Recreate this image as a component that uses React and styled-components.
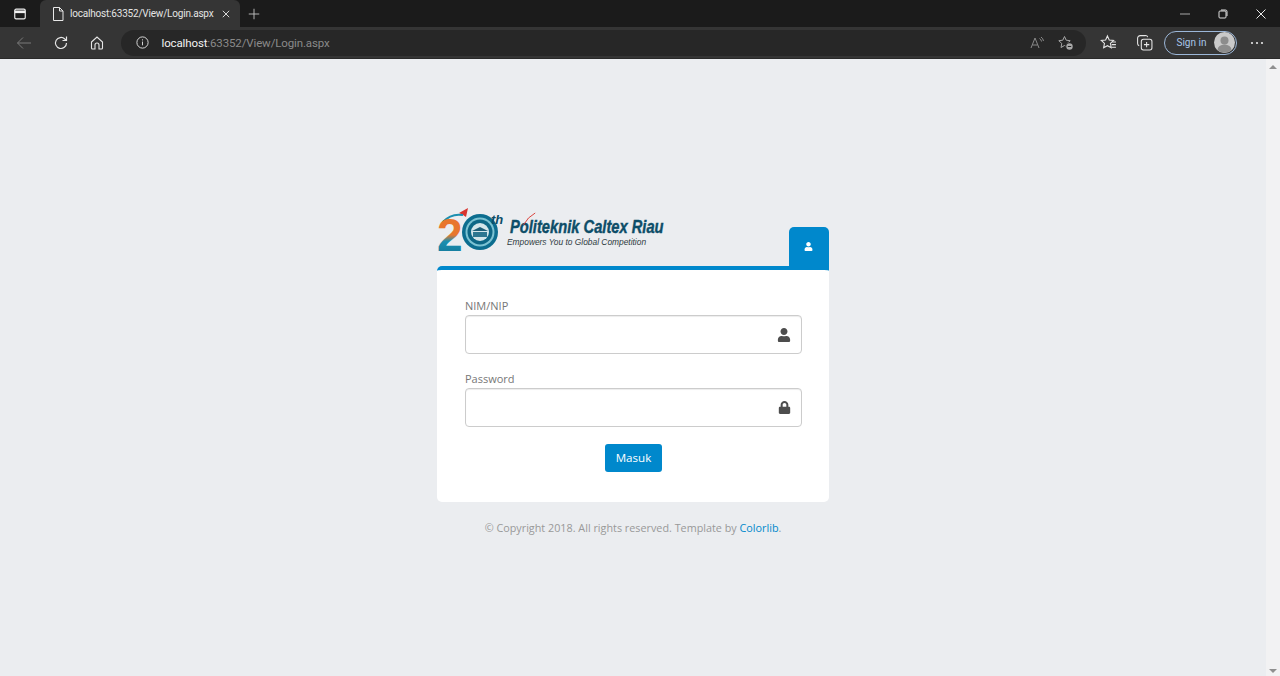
import React from "react";
import styled, { createGlobalStyle } from "styled-components";
import { FaUser, FaLock } from "react-icons/fa";

const GlobalStyle = createGlobalStyle`
	html, body { margin: 0; padding: 0; height: 100%; overflow: hidden; }
	body { background: #ebedf0; font-family: "Open Sans", "Liberation Sans", sans-serif; }
	#root { height: 100%; }
	svg { flex-shrink: 0; }
`;

const Shell = styled.div`
	display: flex;
	flex-direction: column;
	height: 676px;
	width: 1280px;
`;

/* browser chrome */
const TabStrip = styled.div`
	display: flex;
	align-items: flex-end;
	height: 27px;
	background: #1b1b1b;
	color: #e8e8e8;
	font-family: Roboto, "Liberation Sans", sans-serif;
`;
const TabActions = styled.div`
	display: flex;
	align-items: center;
	justify-content: center;
	width: 40px;
	height: 27px;
`;
const Tab = styled.div`
	display: flex;
	align-items: center;
	width: 200px;
	height: 27px;
	box-sizing: border-box;
	padding: 0 10px 0 10px;
	background: #353535;
	border-radius: 6px 6px 0 0;
	font-size: 10px;
`;
const TabTitle = styled.span`
	flex: 1;
	margin-left: 4px;
	letter-spacing: -0.2px;
	white-space: nowrap;
	color: #e4e4e4;
`;
const NewTab = styled.div`
	display: flex;
	align-items: center;
	justify-content: center;
	width: 28px;
	height: 27px;
`;
const WindowButtons = styled.div`
	display: flex;
	margin-left: auto;
	height: 27px;
	align-items: center;
`;
const WindowButton = styled.div`
	display: flex;
	align-items: center;
	justify-content: center;
	width: 38px;
`;

const Toolbar = styled.div`
	display: flex;
	align-items: center;
	height: 32px;
	box-sizing: border-box;
	background: #353535;
	border-bottom: 1px solid #2a2a2a;
	padding-left: 6px;
	font-family: Roboto, "Liberation Sans", sans-serif;
`;
const NavButton = styled.div`
	display: flex;
	align-items: center;
	justify-content: center;
	width: 36.5px;
	height: 26px;
`;
const AddressBar = styled.div`
	display: flex;
	align-items: center;
	width: 965px;
	height: 26px;
	margin-left: 5px;
	padding: 0 11px 0 14px;
	box-sizing: border-box;
	background: #272727;
	border-radius: 13px;
	font-size: 11.5px;
	letter-spacing: -0.13px;
`;
const Host = styled.span`
	margin-left: 12px;
	color: #f2f2f2;
`;
const UrlRest = styled.span`
	color: #8a8a8a;
`;
const AddressActions = styled.div`
	display: flex;
	align-items: center;
	gap: 13px;
	margin-left: auto;
	padding-right: 1px;
`;
const ToolActions = styled.div`
	display: flex;
	align-items: center;
	gap: 19px;
	margin-left: 14px;
`;
const SignIn = styled.div`
	display: flex;
	align-items: center;
	justify-content: space-between;
	width: 73px;
	height: 24px;
	box-sizing: border-box;
	margin-left: -8px;
	padding: 0 1px 0 12px;
	border: 1px solid #9cb7d8;
	border-radius: 12px;
	color: #a9c6ea;
	font-size: 10px;
`;
const More = styled.div`
	display: flex;
	align-items: center;
	margin-left: 12px;
`;

/* page */
const Viewport = styled.div`
	flex: 1;
	display: flex;
	min-height: 0;
`;
const Page = styled.main`
	flex: 1;
	display: flex;
	flex-direction: column;
	align-items: center;
	padding-top: 148px;
	background: #ebedf0;
`;
const Scrollbar = styled.div`
	display: flex;
	flex-direction: column;
	justify-content: space-between;
	align-items: center;
	width: 14px;
	padding: 6px 0 3px;
	box-sizing: border-box;
	background: #f2f2f3;
`;
const Arrow = styled.div`
	width: 0;
	height: 0;
	border-left: 4px solid transparent;
	border-right: 4px solid transparent;
	border-${(p) => (p.$down ? "top" : "bottom")}: 4px solid #8f8f8f;
`;

const LoginBox = styled.div`
	width: 392px;
`;
const BoxHeader = styled.div`
	display: flex;
	align-items: flex-start;
	justify-content: space-between;
	height: 59px;
`;
const LogoWrap = styled.div`
	display: flex;
	align-items: flex-start;
`;
const LogoText = styled.div`
	display: flex;
	flex-direction: column;
	padding-top: 11px;
	white-space: nowrap;
	font-family: "Liberation Sans", Arial, sans-serif;
	font-style: italic;
`;
const LogoTitle = styled.div`
	position: relative;
	margin-left: 3px;
	height: 18px;
	line-height: 18px;
	font-size: 17.5px;
	font-weight: 700;
	color: #0d4d68;
	-webkit-text-stroke: 0.4px #0d4d68;
	transform: scaleX(0.84);
	transform-origin: left center;
`;
const Swoosh = styled.svg`
	position: absolute;
	left: 14px;
	top: -6px;
`;
const LogoTagline = styled.div`
	line-height: 10px;
	margin-top: 1px;
	font-size: 8.4px;
	color: #2d3a40;
`;
const UserTab = styled.div`
	display: flex;
	align-items: center;
	justify-content: center;
	align-self: flex-end;
	width: 40px;
	height: 43px;
	margin-bottom: -4px;
	padding: 0 2px 4px 0;
	box-sizing: border-box;
	background: #0088cc;
	border-radius: 5px 5px 0 0;
	color: #fff;
	font-size: 9px;
	position: relative;
`;
const Card = styled.form`
	box-sizing: border-box;
	height: 236px;
	padding: 27px 27px 0 28px;
	background: #fff;
	border-top: 4px solid #0088cc;
	border-radius: 5px;
`;
const Field = styled.div`
	margin-bottom: 16px;
`;
const Label = styled.label`
	display: block;
	height: 18px;
	line-height: 17px;
	font-size: 11px;
	color: #777;
`;
const InputWrap = styled.div`
	position: relative;
`;
const Input = styled.input`
	display: block;
	width: 100%;
	height: 39px;
	box-sizing: border-box;
	padding: 0 40px 0 12px;
	background: #fff;
	border: 1px solid #cccccc;
	border-radius: 4px;
	box-shadow: inset 0 1px 1px rgba(0, 0, 0, 0.075);
	outline: none;
`;
const InputIcon = styled.span`
	position: absolute;
	top: 0;
	right: 11px;
	height: 39px;
	display: flex;
	align-items: center;
	color: #4d4d4d;
	font-size: ${(p) => p.$size}px;
`;
const Actions = styled.div`
	display: flex;
	justify-content: center;
	padding-top: 1px;
`;
const Submit = styled.button`
	width: 57px;
	height: 28px;
	padding: 0 0 2px;
	background: #0088cc;
	border: none;
	border-radius: 3px;
	color: #fff;
	font-family: inherit;
	font-size: 11.6px;
`;
const Copyright = styled.p`
	margin: 17px 0 0;
	line-height: 17px;
	font-size: 10.8px;
	color: #999;
	text-align: center;
`;
const Link = styled.a`
	color: #0088cc;
	text-decoration: none;
`;

const Icon = ({ size = 16, children, ...rest }) => (
	<svg width={size} height={size} viewBox="0 0 16 16" fill="none" stroke="currentColor" strokeWidth="1" {...rest}>
		{children}
	</svg>
);

const Emblem = () => (
	<svg width="70" height="58" viewBox="0 0 70 58">
		<defs>
			<linearGradient id="two" x1="0" y1="0" x2="0" y2="1">
				<stop offset="0" stopColor="#e8762d" />
				<stop offset="0.5" stopColor="#e8762d" />
				<stop offset="0.62" stopColor="#1c8fb0" />
				<stop offset="1" stopColor="#0f6f92" />
			</linearGradient>
		</defs>
		<path d="M22 6 L31 1 L29 10 L26 8 Z" fill="#d9352f" />
		<path d="M6 15 Q14 6 26 8" stroke="#1c8fb0" strokeWidth="2" fill="none" />
		<text x="0" y="44" fontFamily="Liberation Sans" fontWeight="700" fontSize="46" fill="url(#two)">2</text>
		<circle cx="43" cy="25" r="18" fill="#0c6d8f" />
		<circle cx="43" cy="25" r="14.5" fill="#7cc3d3" />
		<circle cx="43" cy="25" r="12.5" fill="#0d6786" />
		<circle cx="43" cy="25" r="9" fill="#d3e5ea" />
		<path d="M35 24 L43 20 L51 24 Z" fill="#1d5e78" />
		<rect x="36" y="25" width="14" height="5" fill="#2d7690" />
		<text x="54" y="17" fontFamily="Liberation Sans" fontWeight="700" fontStyle="italic" fontSize="13" fill="#0d4d68">th</text>
	</svg>
);

const Logo = () => (
	<LogoWrap>
		<Emblem />
		<LogoText>
			<LogoTitle>
				Politeknik Caltex Riau
				<Swoosh width="24" height="14" viewBox="0 0 24 14">
					<path d="M2 13 Q7 5 16 1" stroke="#d9352f" strokeWidth="1" fill="none" />
				</Swoosh>
			</LogoTitle>
			<LogoTagline>Empowers You to Global Competition</LogoTagline>
		</LogoText>
	</LogoWrap>
);

const App = () => {
	return (
		<Shell>
			<GlobalStyle />
			<TabStrip>
				<TabActions>
					<Icon size={14} stroke="#f0f0f0" strokeWidth="1.3">
						<rect x="2" y="2.5" width="12" height="11" rx="1.5" />
						<path d="M2 5.5h12" strokeWidth="3" />
					</Icon>
				</TabActions>
				<Tab>
					<Icon size={16} stroke="#e8e8e8">
						<path d="M3.5 1.5h6l3.5 3.5v9.5h-9.5z M9.5 1.5v3.5h3.5" />
					</Icon>
					<TabTitle>localhost:63352/View/Login.aspx</TabTitle>
					<Icon size={8} viewBox="0 0 10 10" stroke="#e0e0e0" strokeWidth="1.2">
						<path d="M1 1l8 8M9 1l-8 8" />
					</Icon>
				</Tab>
				<NewTab>
					<Icon size={14} stroke="#c8c8c8">
						<path d="M8 2v12M2 8h12" />
					</Icon>
				</NewTab>
				<WindowButtons>
					<WindowButton>
						<Icon size={10} viewBox="0 0 10 10" stroke="#a8a8a8"><path d="M0 5h10" /></Icon>
					</WindowButton>
					<WindowButton>
						<Icon size={10} viewBox="0 0 10 10" stroke="#e0e0e0">
							<rect x="1" y="2" width="7" height="7" rx="1" />
							<path d="M3 1h4.5a1.5 1.5 0 0 1 1.5 1.5v4.5" />
						</Icon>
					</WindowButton>
					<WindowButton>
						<Icon size={10} viewBox="0 0 10 10" stroke="#e8e8e8"><path d="M0.5 0.5l9 9M9.5 0.5l-9 9" /></Icon>
					</WindowButton>
				</WindowButtons>
			</TabStrip>
			<Toolbar>
				<NavButton>
					<Icon size={16} stroke="#7a7a7a"><path d="M15 8H1.5M7 2.5L1.5 8 7 13.5" /></Icon>
				</NavButton>
				<NavButton>
					<Icon size={16} stroke="#e6e6e6" strokeWidth="1.2">
						<path d="M13.5 8a5.5 5.5 0 1 1-1.7-4L13.5 5.5M13.5 1.5v4h-4" />
					</Icon>
				</NavButton>
				<NavButton>
					<Icon size={16} stroke="#e6e6e6" strokeWidth="1.1">
						<path d="M2.5 7L8 2l5.5 5v6a1 1 0 0 1-1 1H10V10a2 2 0 0 0-4 0v4H3.5a1 1 0 0 1-1-1z" />
					</Icon>
				</NavButton>
				<AddressBar>
					<Icon size={15} stroke="#e0e0e0">
						<circle cx="8" cy="8" r="6" />
						<path d="M8 7v4M8 4.6v1.2" />
					</Icon>
					<Host>localhost</Host>
					<UrlRest>:63352/View/Login.aspx</UrlRest>
					<AddressActions>
						<Icon size={16} stroke="#8a8a8a">
							<path d="M2 13L6 3l4 10M3.5 10h5M10.5 3.5a4 4 0 0 1 2 3M12 2a6 6 0 0 1 2.5 4" />
						</Icon>
						<Icon size={16} stroke="#a8a8a8">
							<path d="M6.5 1.5l1.7 3.7 4 .5-3 2.8.7 4-3.4-2-3.5 2 .8-4-3-2.8 4-.5z" />
							<circle cx="11.5" cy="11.5" r="4.2" fill="#272727" stroke="none" />
							<circle cx="11.5" cy="11.5" r="3.2" fill="#a8a8a8" stroke="none" />
							<path d="M9.8 11.5h3.4" stroke="#272727" />
						</Icon>
					</AddressActions>
				</AddressBar>
				<ToolActions>
					<Icon size={17} stroke="#e6e6e6">
						<path d="M7 1.8l1.7 3.8 4.1.4-3 2.8.8 4.2L7 11l-3.6 2 .8-4.2-3-2.8 4.1-.4z" />
						<path d="M11.5 7.5h3.5M11 10h4M11 12.5h4" />
					</Icon>
					<Icon size={17} stroke="#e6e6e6">
						<rect x="5" y="5" width="10" height="10" rx="2" />
						<path d="M10 7.5v5M7.5 10h5M11 3a2 2 0 0 0-2-1.5H4A2.5 2.5 0 0 0 1.5 4v5A2 2 0 0 0 3 11" />
					</Icon>
					<SignIn>
						Sign in
						<svg width="21" height="21" viewBox="0 0 21 21">
							<circle cx="10.5" cy="10.5" r="10.5" fill="#c9c9c9" />
							<circle cx="10.5" cy="8.5" r="4" fill="#8c8c8c" />
							<path d="M3.5 18a7 5.5 0 0 1 14 0 10.5 10.5 0 0 1-14 0z" fill="#8c8c8c" />
						</svg>
					</SignIn>
				</ToolActions>
				<More>
					<Icon size={16} stroke="none" fill="#e6e6e6">
						<circle cx="3" cy="8" r="1.1" />
						<circle cx="8" cy="8" r="1.1" />
						<circle cx="13" cy="8" r="1.1" />
					</Icon>
				</More>
			</Toolbar>
			<Viewport>
				<Page>
					<LoginBox>
						<BoxHeader>
							<Logo />
							<UserTab>
								<FaUser />
							</UserTab>
						</BoxHeader>
						<Card onSubmit={(e) => e.preventDefault()}>
							<Field>
								<Label htmlFor="nim">NIM/NIP</Label>
								<InputWrap>
									<Input id="nim" type="text" />
									<InputIcon $size={14}><FaUser /></InputIcon>
								</InputWrap>
							</Field>
							<Field>
								<Label htmlFor="password">Password</Label>
								<InputWrap>
									<Input id="password" type="password" />
									<InputIcon $size={13}><FaLock /></InputIcon>
								</InputWrap>
							</Field>
							<Actions>
								<Submit type="submit">Masuk</Submit>
							</Actions>
						</Card>
						<Copyright>
							© Copyright 2018. All rights reserved. Template by <Link href="#">Colorlib</Link>.
						</Copyright>
					</LoginBox>
				</Page>
				<Scrollbar>
					<Arrow />
					<Arrow $down />
				</Scrollbar>
			</Viewport>
		</Shell>
	);
};

export default App;
